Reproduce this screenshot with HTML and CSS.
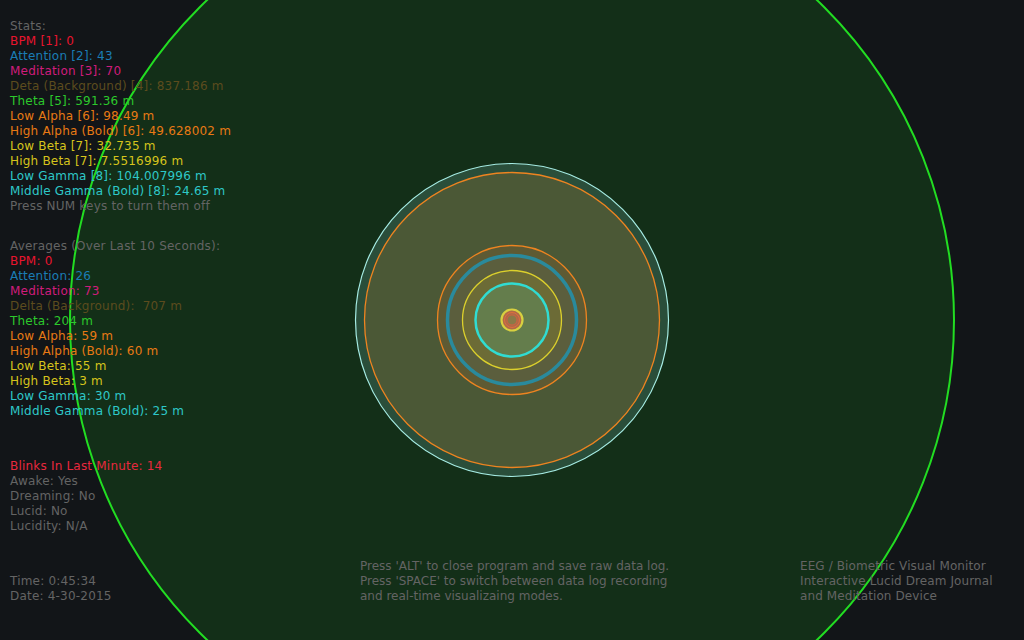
FILE: index.html
```html
<!DOCTYPE html>
<html>
<head>
<meta charset="utf-8">
<link rel="stylesheet" href="styles.css">
</head>
<body>
<div class="screen">
  <svg class="viz" width="1024" height="640" viewBox="0 0 1024 640">
    <circle cx="512" cy="320" r="442" fill="#132f18" stroke="#22dd22" stroke-width="2"/>
    <circle cx="512" cy="320" r="156.5" fill="#2a4e3a" stroke="#a6ece4" stroke-width="1.2"/>
    <circle cx="512" cy="320" r="147.5" fill="#4b5836" stroke="#ee8420" stroke-width="1.3"/>
    <circle cx="512" cy="320" r="74.5" fill="#5e5a33" stroke="#ee8420" stroke-width="1.3"/>
    <circle cx="512" cy="320" r="64.5" fill="#5b5e3d" stroke="#2a8a9c" stroke-width="3.5"/>
    <circle cx="512" cy="320" r="49.5" fill="#6c6b36" stroke="#dcd02c" stroke-width="1.3"/>
    <circle cx="512" cy="320" r="36.5" fill="#647d4c" stroke="#30dcd2" stroke-width="2.5"/>
    <circle cx="512" cy="320" r="10.5" fill="#b06a48" stroke="#d8d040" stroke-width="2.2"/>
    <circle cx="512" cy="320" r="7.5" fill="none" stroke="#e8703a" stroke-width="0.8"/>
    <circle cx="512" cy="320" r="5" fill="#8a7a48" stroke="#d86040" stroke-width="0.8"/>
  </svg>
  <div class="hud">
    <div class="col-left">
      <div class="block">
        <div class="gray">Stats:</div>
        <div class="red">BPM [1]: 0</div>
        <div class="blue">Attention [2]: 43</div>
        <div class="magenta">Meditation [3]: 70</div>
        <div class="brown">Deta (Background) [4]: 837.186 m</div>
        <div class="green">Theta [5]: 591.36 m</div>
        <div class="orange">Low Alpha [6]: 98.49 m</div>
        <div class="orange">High Alpha (Bold) [6]: 49.628002 m</div>
        <div class="yellow">Low Beta [7]: 32.735 m</div>
        <div class="yellow">High Beta [7]: 7.5516996 m</div>
        <div class="cyan">Low Gamma [8]: 104.007996 m</div>
        <div class="cyan">Middle Gamma (Bold) [8]: 24.65 m</div>
        <div class="gray">Press NUM keys to turn them off</div>
      </div>
      <div class="block averages">
        <div class="gray">Averages (Over Last 10 Seconds):</div>
        <div class="red">BPM: 0</div>
        <div class="blue">Attention: 26</div>
        <div class="magenta">Meditation: 73</div>
        <div class="brown">Delta (Background):&nbsp; 707 m</div>
        <div class="green">Theta: 204 m</div>
        <div class="orange">Low Alpha: 59 m</div>
        <div class="orange">High Alpha (Bold): 60 m</div>
        <div class="yellow">Low Beta: 55 m</div>
        <div class="yellow">High Beta: 3 m</div>
        <div class="cyan">Low Gamma: 30 m</div>
        <div class="cyan">Middle Gamma (Bold): 25 m</div>
      </div>
      <div class="block state">
        <div class="blink">Blinks In Last Minute: 14</div>
        <div class="gray">Awake: Yes</div>
        <div class="gray">Dreaming: No</div>
        <div class="gray">Lucid: No</div>
        <div class="gray">Lucidity: N/A</div>
      </div>
      <div class="block clock">
        <div class="gray">Time: 0:45:34</div>
        <div class="gray">Date: 4-30-2015</div>
      </div>
    </div>
    <div class="col-mid">
      <div class="gray">Press 'ALT' to close program and save raw data log.</div>
      <div class="gray">Press 'SPACE' to switch between data log recording</div>
      <div class="gray">and real-time visualizaing modes.</div>
    </div>
    <div class="col-right">
      <div class="gray">EEG / Biometric Visual Monitor</div>
      <div class="gray">Interactive Lucid Dream Journal</div>
      <div class="gray">and Meditation Device</div>
    </div>
  </div>
</div>
</body>
</html>
```
FILE: styles.css
```css
html, body {
  margin: 0;
  padding: 0;
  background: #121518;
}
.screen {
  position: relative;
  width: 1024px;
  height: 640px;
  overflow: hidden;
  background: #121518;
  font-family: "DejaVu Sans", Verdana, sans-serif;
  font-size: 12px;
  line-height: 15px;
  letter-spacing: 0.2px;
  white-space: nowrap;
}
.viz {
  position: absolute;
  left: 0;
  top: 0;
}
.hud {
  position: relative;
  display: flex;
  height: 640px;
  box-sizing: border-box;
  padding: 19px 0 36px 0;
}
.col-left {
  width: 360px;
  padding-left: 10px;
  box-sizing: border-box;
  display: flex;
  flex-direction: column;
}
.averages { margin-top: 25px; }
.state { margin-top: 40px; }
.clock { margin-top: auto; }
.col-mid {
  width: 440px;
  align-self: flex-end;
  letter-spacing: 0;
}
.col-right {
  align-self: flex-end;
  letter-spacing: 0.1px;
}
.gray { color: #646464; }
.red { color: #e8142e; }
.blue { color: #1a7db6; }
.magenta { color: #d01c7c; }
.brown { color: #5c4c1e; }
.green { color: #2cc82c; }
.orange { color: #e87a14; }
.yellow { color: #d6c41c; }
.cyan { color: #2ec8c8; }
.blink { color: #e8283e; }
```
